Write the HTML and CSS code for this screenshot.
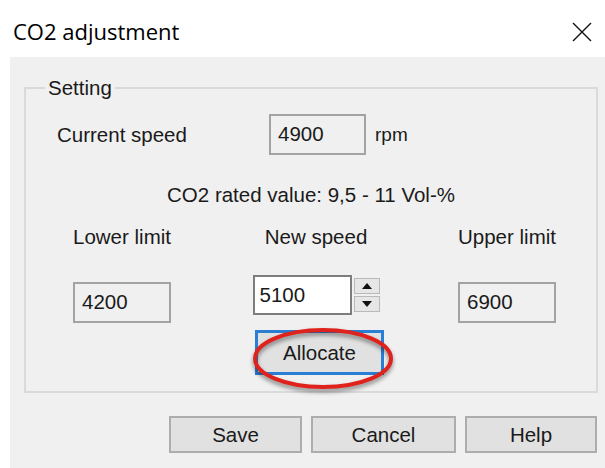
FILE: index.html
```html
<!DOCTYPE html>
<html lang="en">
<head>
<meta charset="utf-8">
<title>CO2 adjustment</title>
<link rel="stylesheet" href="styles.css">
</head>
<body>
<div class="dialog">
  <header class="titlebar">
    <span class="title">CO2 adjustment</span>
    <svg class="close" viewBox="0 0 20 20" width="20" height="20" aria-label="Close">
      <path d="M1 1 L19 19 M19 1 L1 19" stroke="#111" stroke-width="1.4" fill="none"/>
    </svg>
  </header>

  <div class="client">
    <fieldset class="group">
      <legend class="legend">Setting</legend>

      <div class="row-current">
        <span class="label-current">Current speed</span>
        <span class="box readonly">4900</span>
        <span class="unit">rpm</span>
      </div>

      <div class="rated">CO2 rated value: 9,5 - 11 Vol-%</div>

      <div class="limits">
        <div class="col">
          <span class="col-label">Lower limit</span>
          <span class="box readonly limit-box">4200</span>
        </div>
        <div class="col">
          <span class="col-label">New speed</span>
          <div class="spin-row">
            <span class="box editable">5100</span>
            <div class="spinner">
              <span class="spin-btn"><svg viewBox="0 0 10 6" width="10" height="6"><path d="M0 6 L5 0 L10 6 Z" fill="#111"/></svg></span>
              <span class="spin-btn"><svg viewBox="0 0 10 6" width="10" height="6"><path d="M0 0 L5 6 L10 0 Z" fill="#111"/></svg></span>
            </div>
          </div>
          <span class="allocate-wrap">
            <button class="btn allocate" type="button">Allocate</button>
            <svg class="ring" viewBox="0 0 148 74" width="148" height="74">
              <ellipse cx="74" cy="34.5" rx="68" ry="28.5" fill="none" stroke="#e0221d" stroke-width="4"/>
            </svg>
          </span>
        </div>
        <div class="col">
          <span class="col-label">Upper limit</span>
          <span class="box readonly limit-box">6900</span>
        </div>
      </div>
    </fieldset>

    <div class="actions">
      <button class="btn action save" type="button">Save</button>
      <button class="btn action cancel" type="button">Cancel</button>
      <button class="btn action help" type="button">Help</button>
    </div>
  </div>
</div>
</body>
</html>
```

FILE: styles.css
```css
html, body {
  margin: 0;
  padding: 0;
  background: #ffffff;
}

body {
  width: 605px;
  height: 468px;
  overflow: hidden;
  font-family: "Liberation Sans", Arial, sans-serif;
  color: #1a1a1a;
}

.dialog {
  display: flex;
  flex-direction: column;
  height: 468px;
}

/* caption bar */
.titlebar {
  height: 57px;
  display: flex;
  align-items: center;
  justify-content: space-between;
  padding: 0 13px 0 13px;
  box-sizing: border-box;
}

.title {
  font-family: "Open Sans", "Noto Sans", sans-serif;
  font-size: 22px;
  color: #000;
  margin-top: 4px;
}

.close {
  margin-top: 6px;
}

/* client area */
.client {
  flex: 1;
  margin-left: 10px;
  background: #f0f0f0;
  font-size: 20.5px;
  display: flex;
  flex-direction: column;
}

.group {
  margin: 20px 0 0 14px;
  padding: 0 0 16px 0;
  width: 574px;
  box-sizing: border-box;
  border: 2px solid #dadada;
  min-width: 0;
}

.legend {
  margin-left: 19px;
  padding: 0 3px;
  line-height: 22px;
}

.box {
  display: inline-flex;
  align-items: center;
  box-sizing: border-box;
  padding-left: 7px;
  line-height: 1;
}

.readonly {
  border: 2px solid #a3a3a3;
  background: #f0f0f0;
}

.editable {
  border: 2px solid #7d7d7d;
  background: #ffffff;
  width: 99px;
  height: 40px;
  padding-left: 5px;
}

/* current speed row */
.row-current {
  display: flex;
  align-items: center;
  margin-top: 15px;
  padding-left: 31px;
}

.label-current {
  width: 212px;
}

.row-current .box {
  width: 97px;
  height: 41px;
}

.unit {
  margin-left: 9px;
  font-size: 19px;
}

.rated {
  margin-top: 28px;
  line-height: 24px;
  text-align: center;
}

/* limits and new speed */
.limits {
  display: grid;
  grid-template-columns: 192px 196px 1fr;
  margin-top: 18px;
}

.col {
  display: flex;
  flex-direction: column;
  align-items: center;
}

.col-label {
  line-height: 24px;
}

.limit-box {
  width: 98px;
  height: 41px;
  margin-top: 33px;
}

.col:last-child .col-label,
.col:last-child .limit-box {
  position: relative;
  left: 2px;
}

.spin-row {
  display: flex;
  align-items: flex-start;
  gap: 2px;
  margin-top: 26px;
}

.spinner {
  display: flex;
  flex-direction: column;
  gap: 2px;
  padding-top: 3px;
}

.spin-btn {
  width: 26px;
  height: 16px;
  box-sizing: border-box;
  border: 1px solid #b9b9b9;
  background: #e6e6e6;
  display: flex;
  align-items: center;
  justify-content: center;
}

.btn {
  font-family: "Liberation Sans", Arial, sans-serif;
  font-size: 20.5px;
  color: #1a1a1a;
  background: #e1e1e1;
  border: 2px solid #adadad;
  box-sizing: border-box;
  padding: 0;
  cursor: default;
}

.allocate-wrap {
  position: relative;
  margin-top: 15px;
  margin-left: 7px;
  display: block;
}

.allocate {
  width: 129px;
  height: 45px;
  border: 3px solid #2a7fd4;
  display: block;
}

/* red marking ring drawn over the button */
.ring {
  position: absolute;
  left: -6px;
  top: -6px;
  filter: drop-shadow(0 3px 2px rgba(0, 0, 0, 0.45));
  pointer-events: none;
}

/* dialog buttons */
.actions {
  display: flex;
  justify-content: flex-end;
  gap: 9px;
  margin-top: 23px;
  padding-right: 8px;
}

.action {
  height: 37px;
}

.save { width: 133px; }
.cancel { width: 145px; }
.help { width: 132px; }
```
